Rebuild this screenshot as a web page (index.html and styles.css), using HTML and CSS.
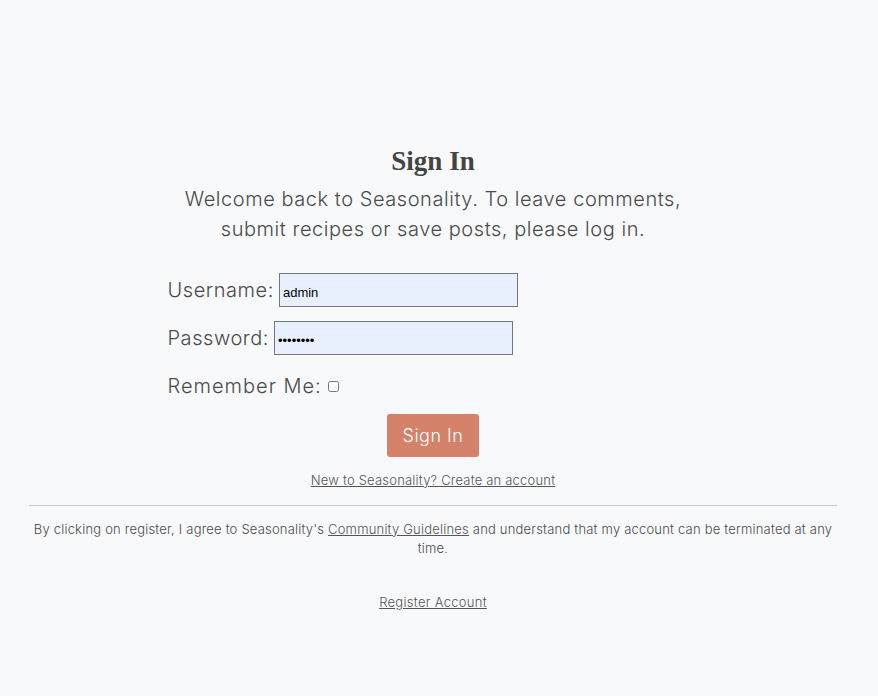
FILE: index.html
```html
<!DOCTYPE html>
<html lang="en">
<head>
<meta charset="utf-8">
<title>Sign In | Seasonality</title>
<link rel="stylesheet" href="styles.css">
</head>
<body>
<main class="page">
  <section class="signin">
    <h1 class="title">Sign In</h1>
    <p class="intro">Welcome back to Seasonality. To leave comments,<br>submit recipes or save posts, please log in.</p>
    <form class="form">
      <p class="row"><label for="u">Username:</label> <input id="u" class="field user" type="text" value="admin"></p>
      <p class="row"><label for="p">Password:</label> <input id="p" class="field pass" type="password" value="password"></p>
      <p class="row last"><label for="r" class="wide">Remember Me:</label> <input id="r" class="check" type="checkbox"></p>
      <div class="actions"><button type="button" class="btn">Sign In</button></div>
    </form>
    <p class="small-link"><a href="#">New to Seasonality? Create an account</a></p>
  </section>
  <hr class="rule">
  <p class="terms">By clicking on register, I agree to Seasonality's <a href="#">Community Guidelines</a> and understand that my account can be terminated at any time.</p>
  <p class="register"><a href="#">Register Account</a></p>
</main>
</body>
</html>
```
FILE: styles.css
```css
html, body {
  margin: 0;
  background: #f8f9fb;
}
body {
  font-family: "Inter", "Liberation Sans", sans-serif;
  font-weight: 300;
  color: #4a4a4a;
}
.page {
  margin: 0 41px 0 29px;
  padding-top: 143px;
}
.signin {
  text-align: center;
}
.title {
  font-family: "Liberation Serif", serif;
  font-weight: 700;
  font-size: 27px;
  line-height: 36px;
  margin: 0;
  color: #444;
}
.intro {
  font-size: 20px;
  line-height: 30px;
  letter-spacing: 0.55px;
  margin: 5px 0 29px;
}
.form {
  width: 531px;
  margin: 0 auto;
  text-align: left;
}
.row {
  font-size: 20px;
  line-height: 34px;
  letter-spacing: 0.55px;
  margin: 0 0 14px;
  display: flex;
  align-items: center;
  gap: 5px;
  height: 34px;
}
.row.last {
  margin-bottom: 11px;
}
.wide {
  letter-spacing: 1px;
}
.field {
  box-sizing: border-box;
  height: 34px;
  width: 239px;
  border: 1px solid #767676;
  background: #e8f0fe;
  font-family: "Liberation Sans", sans-serif;
  font-size: 13px;
  letter-spacing: 0;
  color: #000;
  padding: 4px 3px 0;
  margin: 0;
}
.check {
  width: 11px;
  height: 11px;
  margin: 0 0 0 1px;
}
.actions {
  text-align: center;
}
.btn {
  display: inline-block;
  vertical-align: top;
  background: #d4826a;
  color: #fff;
  border: none;
  border-radius: 3px;
  font-family: inherit;
  font-weight: 300;
  font-size: 18px;
  letter-spacing: 0.5px;
  width: 92px;
  height: 43px;
  padding: 0;
}
.small-link {
  font-size: 13px;
  line-height: 16px;
  letter-spacing: 0.2px;
  margin: 15px 0 0;
}
a {
  color: #555;
}
.rule {
  border: 0;
  border-top: 1px solid #c8c8c8;
  margin: 17px 0 0;
}
.terms {
  text-align: center;
  font-size: 13px;
  line-height: 19px;
  letter-spacing: 0.2px;
  margin: 14px 0 0;
}
.register {
  text-align: center;
  font-size: 13px;
  line-height: 16px;
  letter-spacing: 0.3px;
  margin: 36px 0 0;
}
```
